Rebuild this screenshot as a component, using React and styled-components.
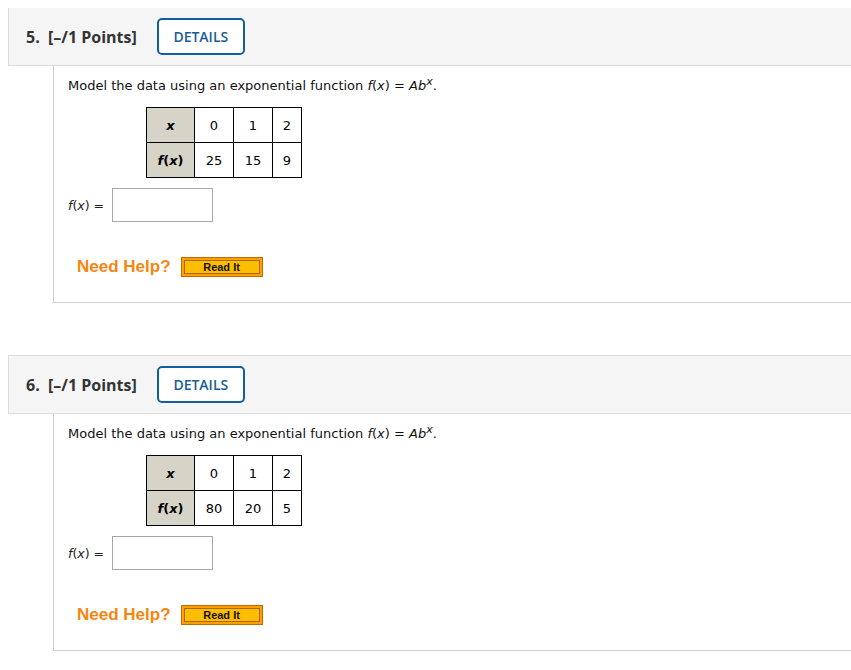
import React from "react"
import styled, { createGlobalStyle } from "styled-components"

const Global = createGlobalStyle`
    body { margin: 8px 0 8px 8px; background: #fff; font-family: "DejaVu Sans", Verdana, sans-serif; }
`

const questions = [
    { num: 5, values: [25, 15, 9] },
    { num: 6, values: [80, 20, 5] },
]

const Question = ({ num, values }) => (
    <Block>
        <Header>
            <Title>{num}.&nbsp; [–/1 Points]</Title>
            <Details>DETAILS</Details>
        </Header>
        <Body>
            <Prompt>
                Model the data using an exponential function <i>f</i>(<i>x</i>) = <i>Ab</i><Sup><i>x</i></Sup>.
            </Prompt>
            <Table>
                <tbody>
                    <tr>
                        <Head><i>x</i></Head>
                        <Cell>0</Cell>
                        <Cell>1</Cell>
                        <Cell $narrow>2</Cell>
                    </tr>
                    <tr>
                        <Head><i>f</i>(<i>x</i>)</Head>
                        {values.map((v, i) => <Cell key={i} $narrow={i === 2}>{v}</Cell>)}
                    </tr>
                </tbody>
            </Table>
            <AnswerRow>
                <Label><i>f</i>(<i>x</i>) =</Label>
                <Answer />
            </AnswerRow>
            <HelpRow>
                <NeedHelp>Need Help?</NeedHelp>
                <ReadIt><span>Read It</span></ReadIt>
            </HelpRow>
        </Body>
    </Block>
)

const App = () => (
    <Page>
        <Global />
        {questions.map(q => <Question key={q.num} {...q} />)}
    </Page>
)

const Page = styled.div`
    display: flex;
    flex-direction: column;
    gap: 52px;
    margin-top: -1px;
`

const Block = styled.div`
    display: flex;
    flex-direction: column;
`

const Header = styled.div`
    display: flex;
    align-items: center;
    gap: 20px;
    height: 57px;
    padding-left: 17px;
    background: #f5f5f5;
    border: 1px solid #dcdcdc;
    border-right: none;
`

const Title = styled.div`
    font-family: "Open Sans", sans-serif;
    font-weight: 700;
    font-size: 16px;
    color: #333;
`

const Details = styled.button`
    width: 88px;
    height: 37px;
    border: 2px solid #10609e;
    border-radius: 5px;
    background: #fff;
    color: #1a5d96;
    font-family: "Open Sans", sans-serif;
    font-weight: 600;
    font-size: 14px;
    padding: 0;
`

const Body = styled.div`
    margin-left: 45px;
    height: 237px;
    border-left: 1px solid #cfcfcf;
    border-bottom: 1px solid #cfcfcf;
    padding: 12px 0 0 14px;
    display: flex;
    flex-direction: column;
    align-items: flex-start;
    box-sizing: border-box;
`

const Prompt = styled.div`
    font-size: 13px;
    color: #111;
    line-height: 16px;
`

const Sup = styled.sup`
    font-size: 11px;
    vertical-align: 5px;
    line-height: 0;
`

const Table = styled.table`
    border-collapse: collapse;
    margin: 13px 0 0 78px;
    font-size: 13px;
`

const Head = styled.td`
    width: 47px;
    height: 34px;
    border: 1px solid #000;
    background: #d6d3c7;
    text-align: center;
    font-weight: 700;
    padding: 0;
`

const Cell = styled.td`
    width: ${p => (p.$narrow ? 28 : 38)}px;
    height: 34px;
    border: 1px solid #000;
    text-align: center;
    padding: 0;
`

const AnswerRow = styled.div`
    display: flex;
    align-items: center;
    gap: 8px;
    margin-top: 10px;
`

const Label = styled.span`
    font-size: 12.5px;
    color: #222;
`

const Answer = styled.input`
    width: 101px;
    height: 34px;
    box-sizing: border-box;
    border: 1px solid #a7a7a7;
    background: #fff;
    margin: 0;
`

const HelpRow = styled.div`
    display: flex;
    align-items: center;
    gap: 10px;
    margin: 35px 0 0 9px;
`

const NeedHelp = styled.span`
    font-family: "Liberation Sans", Arial, sans-serif;
    font-weight: 700;
    font-size: 17px;
    color: #f7860f;
`

const ReadIt = styled.div`
    width: 82px;
    height: 20px;
    box-sizing: border-box;
    border: 1px solid #c26b05;
    background: #ff9e00;
    padding: 2px;
    display: flex;

    span {
        flex: 1;
        border: 1px solid #a8690c;
        background: #ffbd00;
        font-family: "Liberation Sans", Arial, sans-serif;
        font-weight: 700;
        font-size: 11px;
        color: #111;
        text-align: center;
        line-height: 12px;
    }
`

export default App
